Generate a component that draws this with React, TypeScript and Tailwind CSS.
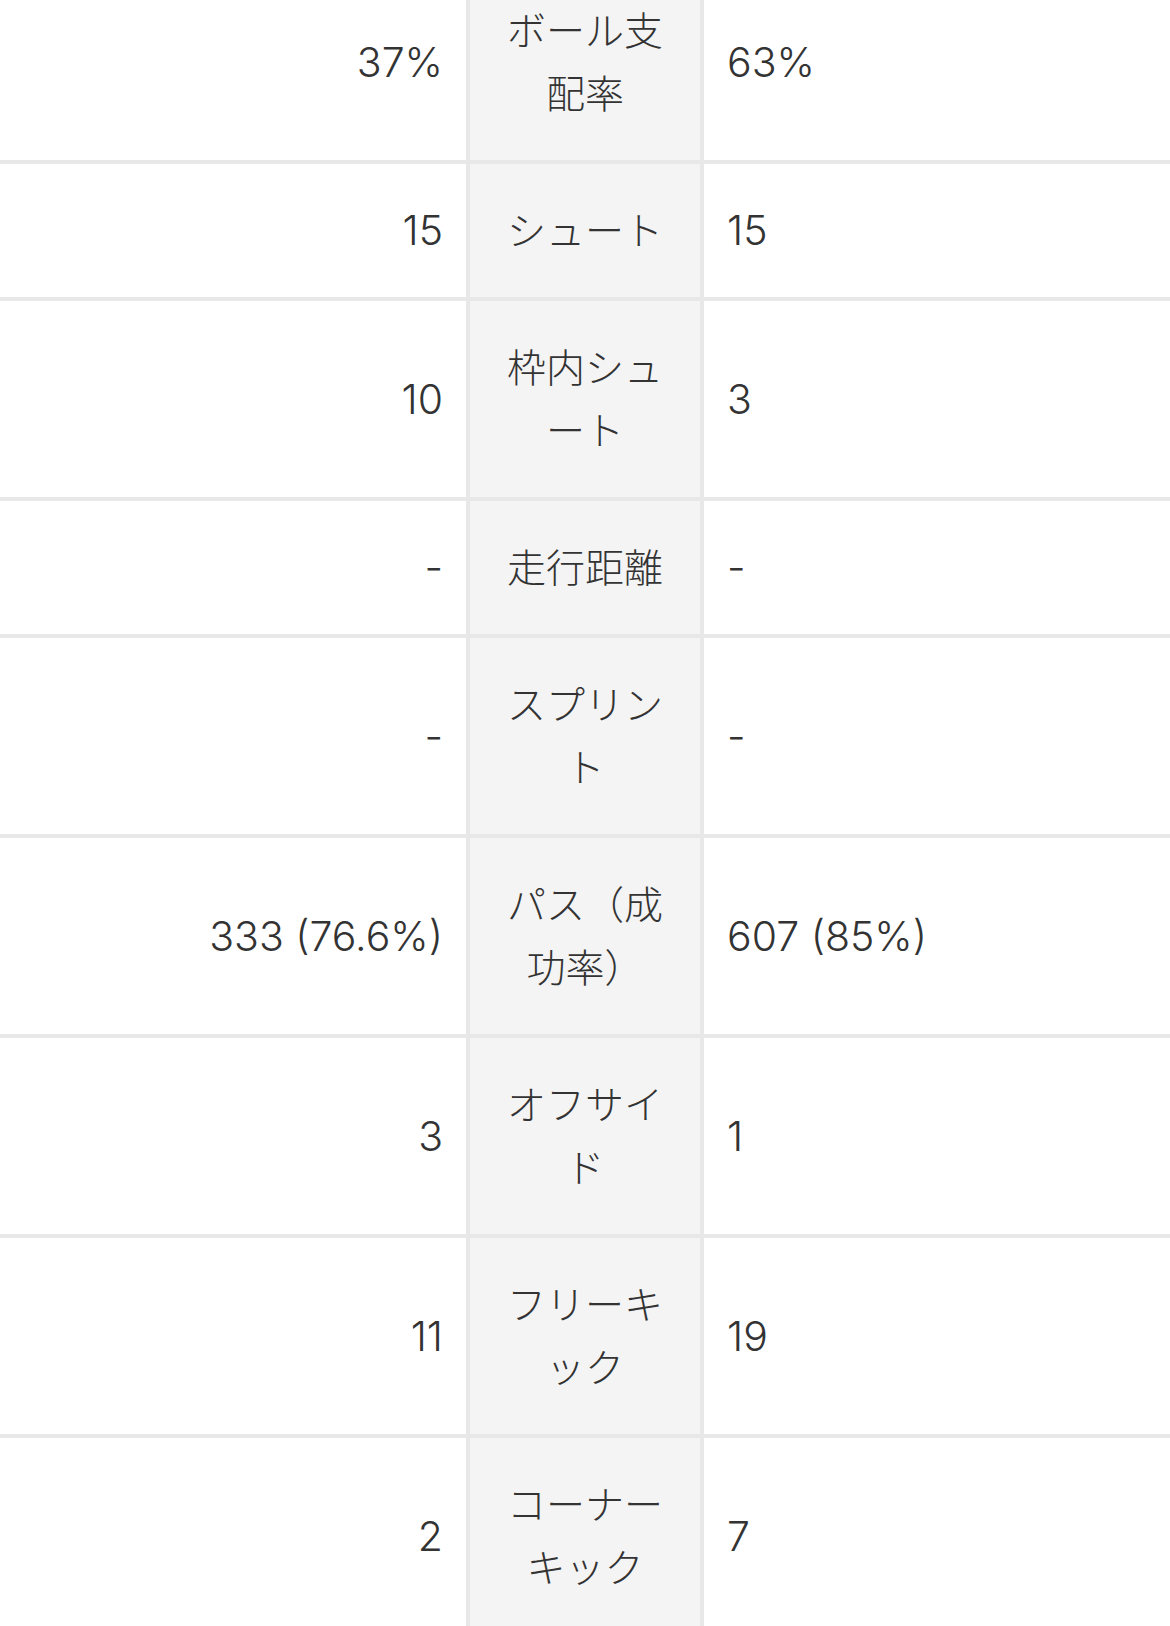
import React from "react";

type Row = { left: string; label: string[]; right: string };

const rows: Row[] = [
  { left: "37%", label: ["ボール支", "配率"], right: "63%" },
  { left: "15", label: ["シュート"], right: "15" },
  { left: "10", label: ["枠内シュ", "ート"], right: "3" },
  { left: "-", label: ["走行距離"], right: "-" },
  { left: "-", label: ["スプリン", "ト"], right: "-" },
  { left: "333 (76.6%)", label: ["パス（成", "功率）"], right: "607 (85%)" },
  { left: "3", label: ["オフサイ", "ド"], right: "1" },
  { left: "11", label: ["フリーキ", "ック"], right: "19" },
  { left: "2", label: ["コーナー", "キック"], right: "7" },
];

export default function App() {
  return (
    <div className="h-[1626px] w-[1170px] overflow-hidden bg-white">
      <div
        className="-mt-[36px] grid grid-cols-[466px_230px_466px] gap-[4px] bg-[#e8e8e8] text-[#333333]"
        style={{ fontFamily: '"Inter", "Noto Sans CJK JP", sans-serif' }}
      >
        {rows.map((r, i) => (
          <React.Fragment key={i}>
            <div className="flex items-center justify-end bg-white py-[35px] pr-[23px] text-[41px] font-[350] leading-[63px]">
              {r.left}
            </div>
            <div
              className="flex flex-col items-center justify-center bg-[#f4f4f4] px-[24px] pt-[33px] pb-[37px] text-center text-[39px] font-light leading-[63px]"
              style={{ fontFamily: '"Noto Sans CJK JP", sans-serif' }}
            >
              {r.label.map((l, j) => (
                <span key={j} className="block whitespace-nowrap">
                  {l}
                </span>
              ))}
            </div>
            <div className="flex items-center justify-start bg-white py-[35px] pl-[23px] text-[41px] font-[350] leading-[63px]">
              {r.right}
            </div>
          </React.Fragment>
        ))}
      </div>
    </div>
  );
}
